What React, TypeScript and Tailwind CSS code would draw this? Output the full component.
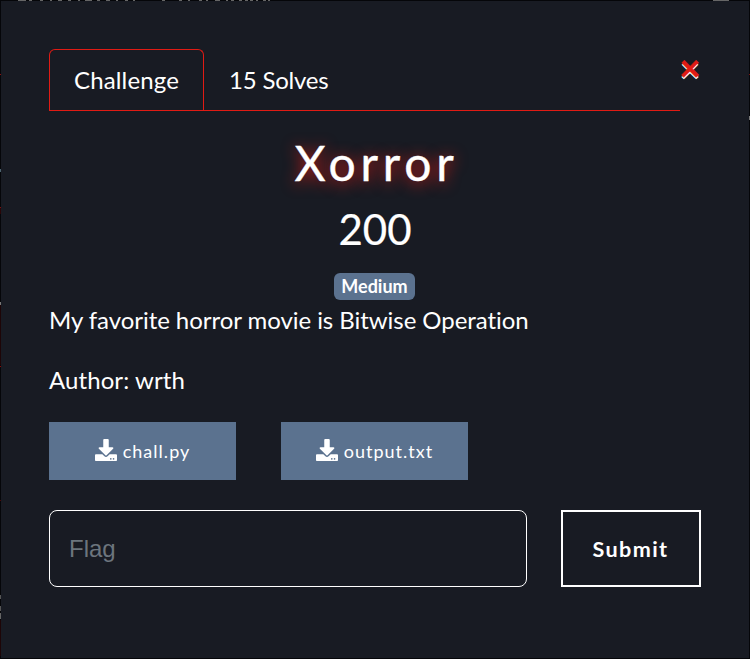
import React from "react";
import { FaDownload } from "react-icons/fa";

function DownloadIcon() {
  return <FaDownload className="h-[22px] w-[22px] shrink-0" />;
}

function FileButton({ name }: { name: string }) {
  return (
    <a className="flex h-[58px] w-[187px] items-center justify-center gap-[6px] bg-[#5b728f] pb-[2px] text-[18px] tracking-[1.02px]">
      <DownloadIcon />
      <span className="pt-px">{name}</span>
    </a>
  );
}

const topMarks = [
  [18, 8], [29, 3], [40, 3], [50, 2], [58, 4], [68, 3], [78, 2], [85, 7], [97, 3], [106, 4], [116, 2], [125, 3], [133, 2],
  [162, 3], [179, 3], [188, 2], [199, 3], [206, 2], [215, 5], [226, 2], [231, 3], [239, 3], [245, 3], [250, 3], [256, 2], [263, 3], [268, 2],
  [713, 16],
];

const sideMarks = [
  "left-0 top-[74px] h-px bg-[#8a1010]",
  "left-0 top-[169px] h-[3px] bg-[#4d6470]",
  "left-0 top-[207px] h-px bg-[#7a1010]",
  "left-0 top-[208px] h-[6px] bg-[#2a0507]",
  "left-0 top-[302px] h-[3px] bg-[#777777]",
  "left-0 top-[305px] h-[60px] bg-[#1d0507]",
  "left-0 top-[366px] h-px bg-[#8a0808]",
  "left-0 top-[500px] h-px bg-[#4a0606]",
  "left-0 top-[595px] h-[4px] bg-[#555555]",
  "left-0 top-[606px] h-[5px] bg-[#555555]",
  "left-0 top-[613px] h-[6px] bg-[#666666]",
  "left-0 top-[620px] h-[36px] bg-[#1d0507]",
  "right-0 top-[74px] h-px bg-[#7a1010]",
  "right-0 top-[116px] h-[4px] bg-[#777777]",
];

export default function App() {
  return (
    <div className="relative h-[659px] w-[750px] overflow-hidden bg-[#050609] p-px font-['Lato',sans-serif] text-[24px] leading-[36px] text-white [font-variant-ligatures:none]">
      {topMarks.map(([x, w]) => (
        <span key={x} className="absolute top-0 h-px bg-[#666666]" style={{ left: x, width: w }} />
      ))}
      {sideMarks.map((m) => (
        <span key={m} className={"absolute w-px " + m} />
      ))}

      <div className="h-[657px] bg-[#181b23] px-12 pt-12">
        <header className="flex h-[62px] justify-between">
          <nav className="flex w-[631px] border-b border-[#e01b14]">
            <a className="h-[61px] w-[155px] rounded-t-[6px] border border-b-0 border-[#e01b14] pl-6 pt-3 tracking-[0.14px]">Challenge</a>
            <a className="pl-[25px] pt-[13px] tracking-[-0.2px]">15 Solves</a>
          </nav>
          <button className="mr-[0.5px] h-[36px] w-[21px] text-[36px] font-bold leading-[36px] text-[#e01b14] [-webkit-text-stroke:0.6px_#e01b14] [text-shadow:0_2px_0_#fff]">×</button>
        </header>

        <main>
          <h2 className="mt-[23px] pl-[3px] text-center text-[48px] leading-[58px] tracking-[4.8px] [-webkit-text-stroke:0.4px_#fff] [text-shadow:0_2px_15px_#e01b14]">Xorror</h2>
          <h3 className="mt-[12px] text-center text-[42px] leading-[50px] [-webkit-text-stroke:0.2px_#fff]">200</h3>
          <div className="mt-[19px] flex justify-center pr-[2px]">
            <span className="flex h-[27px] w-[81px] items-center justify-center rounded-[6px] bg-[#5b728f] pb-[2px] pl-px text-[18px] font-bold leading-[18px]">Medium</span>
          </div>
          <p className="mt-[2px] tracking-[-0.05px]">My favorite horror movie is Bitwise Operation</p>
          <p className="mt-6 tracking-[0.08px]">Author: wrth</p>
          <div className="mt-[24px] flex gap-[45px]">
            <FileButton name="chall.py" />
            <FileButton name="output.txt" />
          </div>
          <form className="mt-[30px] flex gap-[34px]">
            <input
              placeholder="Flag"
              className="h-[77px] w-[478px] rounded-[8px] border border-white bg-transparent px-[19px] font-['Liberation_Sans',sans-serif] text-[24px] placeholder:text-[#6c757d]"
            />
            <button type="button" className="h-[77px] w-[140px] border-2 border-white pr-px text-[21.6px] font-bold tracking-[1.4px]">
              Submit
            </button>
          </form>
        </main>
      </div>
    </div>
  );
}
